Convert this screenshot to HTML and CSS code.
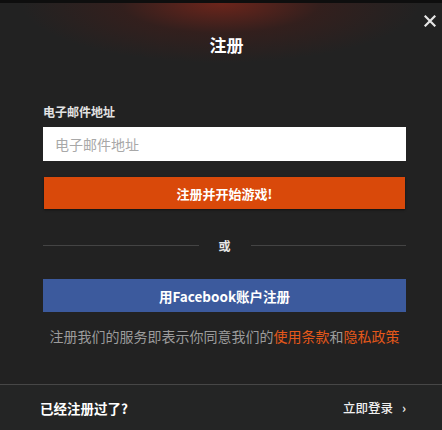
FILE: index.html
```html
<!DOCTYPE html>
<html>
<head>
<meta charset="utf-8">
<link rel="stylesheet" href="styles.css">
</head>
<body>
<div class="modal">
  <div class="glow"></div>
  <button class="close" aria-label="关闭">
    <svg width="12" height="12" viewBox="0 0 12 12"><path d="M1.5 1.5L10.5 10.5M10.5 1.5L1.5 10.5" stroke="#e6e6e6" stroke-width="2.2" stroke-linecap="square"/></svg>
  </button>
  <div class="body">
    <h1 class="title">注册</h1>
    <label class="label">电子邮件地址</label>
    <input class="input" type="text" placeholder="电子邮件地址">
    <button class="btn btn-primary">注册并开始游戏!</button>
    <div class="divider"><span class="line"></span><span class="or">或</span><span class="line"></span></div>
    <button class="btn btn-fb">用Facebook账户注册</button>
    <p class="terms">注册我们的服务即表示你同意我们的<a class="link">使用条款</a>和<a class="link">隐私政策</a></p>
  </div>
  <div class="footer">
    <span class="already">已经注册过了?</span>
    <span class="login">立即登录 <span class="chev">›</span></span>
  </div>
</div>
</body>
</html>
```
FILE: styles.css
```css
html, body { margin: 0; padding: 0; }
body {
  width: 442px; height: 430px; overflow: hidden;
  background: #0e0e0e;
  font-family: "Noto Sans CJK SC", "Microsoft YaHei", sans-serif;
}
.modal {
  position: relative;
  margin-top: 3px;
  height: 427px;
  background: #222222;
  display: flex; flex-direction: column;
}
.glow {
  position: absolute; left: 0; right: 0; top: 0; height: 70px;
  background: radial-gradient(ellipse 200px 60px at 50% 0%, rgba(140,38,24,0.7), rgba(90,25,18,0.3) 50%, rgba(34,34,34,0) 100%);
  pointer-events: none;
}
.close {
  position: absolute; right: 6px; top: 12px;
  width: 12px; height: 12px; padding: 0; border: 0; background: none;
  display: flex;
}
.body {
  position: relative;
  flex: 1;
  padding: 0 36px 0 43px;
  display: flex; flex-direction: column;
}
.title {
  margin: 31px 0 0; text-align: center;
  font-size: 17px; font-weight: 700; color: #ffffff; line-height: 22px;
  padding-left: 4px;
}
.label {
  margin-top: 48px; font-size: 12px; font-weight: 700; color: #e2e2e2; line-height: 16px;
}
.input {
  margin-top: 7px; height: 34px; box-sizing: border-box;
  border: 0; outline: 0; background: #ffffff;
  padding: 0 0 0 12px;
  font-family: inherit; font-size: 14px; color: #333;
}
.input::placeholder { color: #a8a8a8; }
.btn {
  border: 0; width: 100%; box-sizing: border-box;
  font-family: inherit; font-weight: 700; color: #fff; padding: 0;
}
.btn-primary {
  margin: 16px 0 0 1px; width: 361px; height: 32px;
  background: #d9490a; font-size: 13px;
  box-shadow: 0 1px 2px rgba(0,0,0,0.5);
}
.divider {
  margin-top: 28px; display: flex; align-items: center; height: 16px;
}
.line { flex: 1; height: 1px; background: #444; }
.or { width: 52px; text-align: center; font-size: 12px; font-weight: 700; color: #e6e6e6; }
.btn-fb {
  margin-top: 26px; height: 33px; background: #3c5a9d; font-size: 13.5px;
}
.terms {
  margin: 14px 0 0; text-align: center; font-size: 14px; color: #9c9c9c; line-height: 20px;
  white-space: nowrap;
}
.link { color: #e5581a; }
.footer {
  height: 45px; border-top: 1px solid #474747;
  background: #242525;
  display: flex; align-items: center; justify-content: space-between;
  padding: 0 36px 0 40px;
}
.already { font-size: 13.5px; font-weight: 700; color: #ffffff; }
.login { font-size: 12.5px; color: #f0f0f0; font-weight: 500; }
.chev { margin-left: 6px; font-weight: 700; }
```
